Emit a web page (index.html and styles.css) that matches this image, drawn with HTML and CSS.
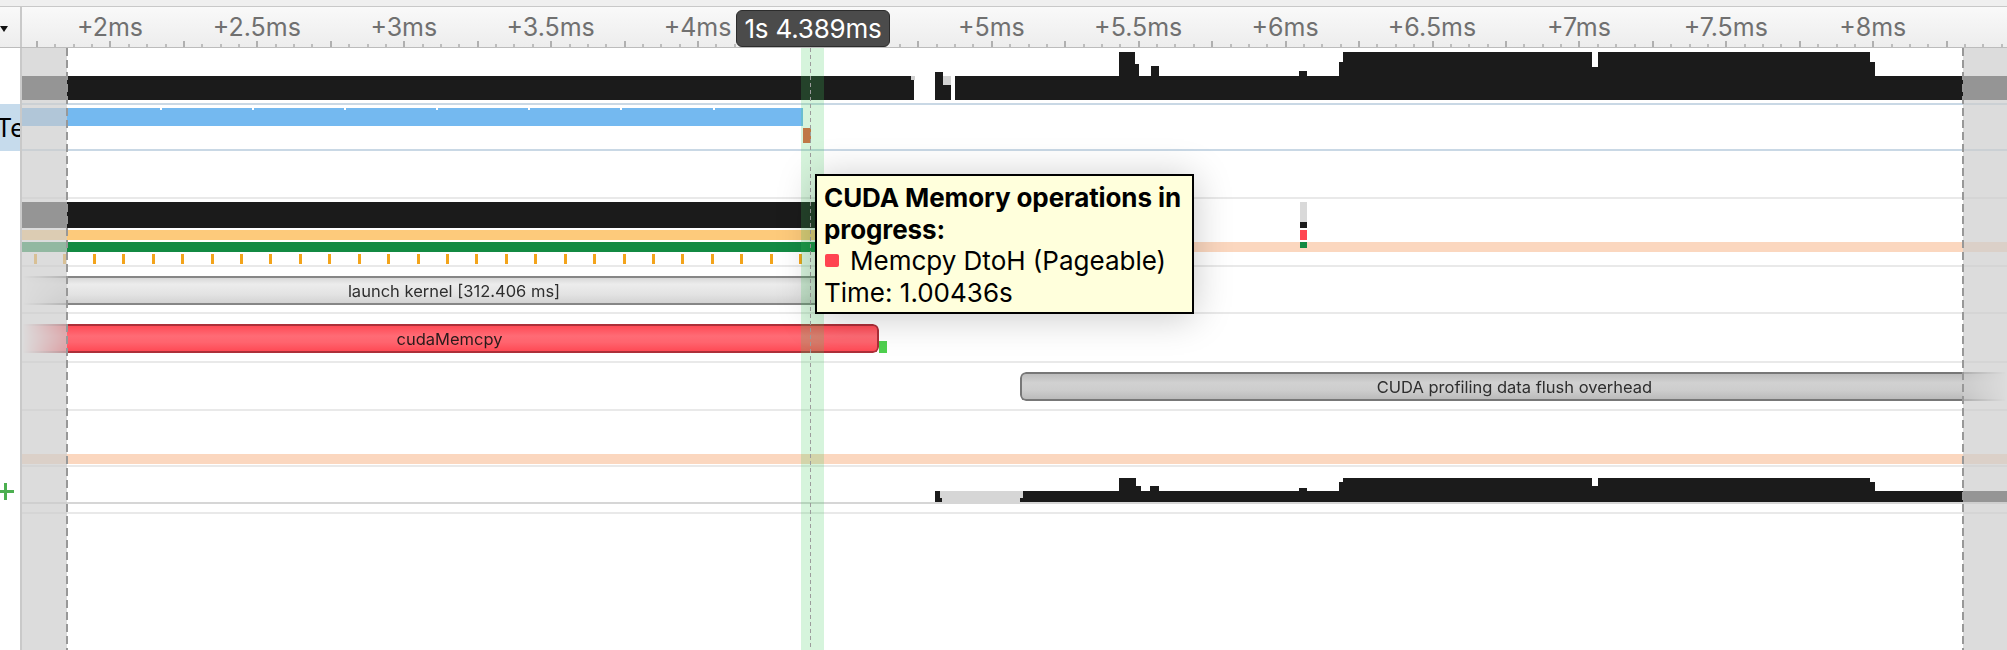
FILE: index.html
```html
<!DOCTYPE html>
<html>
<head>
<meta charset="utf-8">
<title>Timeline</title>
<link rel="stylesheet" href="styles.css">
</head>
<body>
<div class="app">
  <div class="strip"></div>
  <div class="header">
    <div class="corner"><span class="caret"></span></div>
    <div class="ruler">
      <div class="labels">
        <span>+2ms</span><span>+2.5ms</span><span>+3ms</span><span>+3.5ms</span><span>+4ms</span><span></span><span>+5ms</span><span>+5.5ms</span><span>+6ms</span><span>+6.5ms</span><span>+7ms</span><span>+7.5ms</span><span>+8ms</span>
      </div>
      <div class="badge">1s 4.389ms</div>
    </div>
  </div>
  <div class="main">
    <div class="side">
      <div class="srow s-a"></div>
      <div class="srow s-sel"><span class="lbl">Te</span></div>
      <div class="srow s-mid"></div>
      <div class="srow s-add">
        <svg class="plus" width="17" height="17" viewBox="0 0 17 17"><path d="M8.5 0V17M0 8.5H17" stroke="#4caf50" stroke-width="3"/></svg>
      </div>
    </div>
    <div class="tracks">
      <div class="row row-a">
        <svg class="chart chart-a" width="1985" height="55" viewBox="22 48 1985 55">
          <path d="M22 76H914V100H22Z" fill="#1b1b1b"/>
          <rect x="911" y="76" width="4" height="4" fill="#d0d0d0"/>
          <path d="M935 72H943V85H951V100H935Z" fill="#1b1b1b"/>
          <rect x="943" y="76" width="8" height="9" fill="#d2d2d2"/>
          <path d="M955 76H1119V52H1135V64H1139V76H1151V66H1159V76H1299V71H1307V76H1339V62H1343V52H1592V67H1598V52H1870V62H1875V76H2007V100H955Z" fill="#1b1b1b"/>
        </svg>
      </div>
      <div class="row row-b">
        <div class="bar blue"></div>
        <div class="bar red-mini"></div>
      </div>
      <div class="row row-c"></div>
      <div class="row row-d">
        <div class="bar d-black"></div>
        <div class="bar d-orange"></div>
        <div class="bar d-green"></div>
        <div class="bar d-salmon"></div>
        <div class="bar d-ticks"></div>
        <div class="bar m-gray"></div>
        <div class="bar m-black"></div>
        <div class="bar m-red"></div>
        <div class="bar m-green"></div>
      </div>
      <div class="row row-e">
        <div class="slice launch">launch kernel [312.406 ms]</div>
      </div>
      <div class="row row-f">
        <div class="slice memcpy">cudaMemcpy</div>
        <div class="bar f-green"></div>
      </div>
      <div class="row row-g">
        <div class="slice flush">CUDA profiling data flush overhead</div>
      </div>
      <div class="row row-h">
        <div class="bar h-salmon"></div>
      </div>
      <div class="row row-i">
        <svg class="chart chart-i" width="1985" height="35" viewBox="22 467 1985 35">
          <path d="M935 491H940V498H942V502H935Z" fill="#1b1b1b"/>
          <rect x="940" y="491" width="83" height="7" fill="#d6d6d6"/>
          <rect x="942" y="498" width="78" height="4" fill="#d6d6d6"/>
          <path d="M1023 491H1119V478H1136V486H1141V491H1150V486H1159V491H1299V488H1307V491H1339V482H1343V478H1592V486H1598V478H1870V482H1875V491H2007V502H1020V498H1023Z" fill="#1b1b1b"/>
        </svg>
      </div>
      <div class="row row-j"></div>

      <div class="shade shade-left"></div>
      <div class="shade shade-right"></div>
      <div class="edge edge-left"></div>
      <div class="edge edge-right"></div>
      <div class="cursor-band"></div>
      <div class="cursor-line"></div>

      <div class="tip">
        <div class="tip-title">CUDA Memory operations in<br>progress:</div>
        <div class="tip-item"><span class="sw"></span>Memcpy DtoH (Pageable)</div>
        <div class="tip-item">Time: 1.00436s</div>
      </div>
    </div>
  </div>
</div>
</body>
</html>
```

FILE: styles.css
```css
* { box-sizing: border-box; }
html, body { margin: 0; padding: 0; }
body {
  width: 2007px;
  height: 650px;
  overflow: hidden;
  background: #fff;
  font-family: Inter, "Liberation Sans", sans-serif;
}
.app { display: flex; flex-direction: column; height: 650px; }

.strip { height: 7px; background: #efefef; border-bottom: 1px solid #c8c8c8; }

.header {
  display: flex;
  height: 41px;
  border-bottom: 1px solid #bcbcbc;
  background: linear-gradient(#f9f9f9, #ededed);
}
.corner {
  width: 22px;
  border-right: 2px solid #c9c9c9;
  display: flex;
  align-items: center;
  padding-top: 4px;
}
.caret {
  width: 0; height: 0;
  border-left: 4.5px solid transparent;
  border-right: 4.5px solid transparent;
  border-top: 6px solid #111;
}
.ruler {
  position: relative;
  flex: 1;
  background:
    repeating-linear-gradient(to right, #b0b0b0 0 2px, transparent 2px 73.45px) 13.5px 100% / calc(100% - 13.5px) 6px no-repeat,
    repeating-linear-gradient(to right, #bdbdbd 0 2px, transparent 2px 18.3625px) 13.5px 100% / calc(100% - 13.5px) 3px no-repeat;
}
.labels {
  display: flex;
  height: 100%;
  align-items: center;
  padding-left: 14.55px;
  padding-bottom: 1px;
}
.labels span {
  flex: 0 0 146.9px;
  text-align: center;
  font-size: 25px;
  color: #707070;
  white-space: nowrap;
}
.badge {
  position: absolute;
  left: 714px;
  top: 3px;
  width: 154px;
  height: 37px;
  border-radius: 6px;
  background: #4b4b4b;
  border: 1px solid #2c2c2c;
  color: #fff;
  font-size: 26px;
  letter-spacing: -0.2px;
  display: flex;
  align-items: center;
  justify-content: center;
  white-space: nowrap;
}

.main { display: flex; height: 602px; }
.side {
  width: 22px;
  border-right: 2px solid #c9c9c9;
  display: flex;
  flex-direction: column;
  overflow: hidden;
}
.srow { flex: none; }
.s-a { height: 56px; }
.s-sel {
  height: 47px;
  background: #c6dbec;
  display: flex;
  align-items: center;
  overflow: hidden;
}
.lbl { font-size: 25px; color: #000; margin-left: -4px; white-space: nowrap; }
.s-mid { height: 316px; }
.s-add {
  height: 37px;
  display: flex;
  align-items: center;
  padding-top: 12px;
}
.plus { margin-left: -3px; flex: none; }

.tracks { position: relative; flex: 1; overflow: hidden; }
.row { position: relative; border-bottom: 2px solid #e9e9e9; }
.row-a { height: 57px; border-bottom-color: #c9d8e5; }
.row-b { height: 46px; border-bottom-color: #c9d8e5; }
.row-c { height: 48px; }
.row-d { height: 68px; }
.row-e { height: 47px; }
.row-f { height: 49px; }
.row-g { height: 48px; }
.row-h { height: 56px; }
.row-i { height: 37px; border-bottom-color: #d6d6d6; }
.row-j { height: 10px; }

.chart { position: absolute; left: 0; top: 0; display: block; }

.bar { position: absolute; }
.blue { left: 0; width: 781px; top: 3px; height: 18px; background: #74b9f0; }
.blue::before {
  content: "";
  position: absolute;
  left: 138px; right: 0; top: 0; height: 2px;
  background: repeating-linear-gradient(to right, #fff 0 2px, transparent 2px 92.1px);
}
.red-mini { left: 781px; width: 8px; top: 23px; height: 15px; background: #e2603f; }

.d-black { left: 0; width: 850px; top: 3px; height: 26px; background: #1b1b1b; }
.d-orange { left: 0; width: 850px; top: 31px; height: 10px; background: #fdca7b; }
.d-green { left: 0; width: 850px; top: 43px; height: 10px; background: #138a43; }
.d-salmon { left: 850px; right: 0; top: 43px; height: 10px; background: #fbd7bf; }
.d-ticks {
  left: 12.2px; width: 850px; top: 55px; height: 10px;
  background: repeating-linear-gradient(to right, #f3a41a 0 3px, transparent 3px 29.43px);
}
.m-gray { left: 1278px; width: 7px; top: 3px; height: 20px; background: #d9d9d9; }
.m-black { left: 1278px; width: 7px; top: 23px; height: 6px; background: #1b1b1b; }
.m-red { left: 1278px; width: 7px; top: 31px; height: 10px; background: #ff4652; }
.m-green { left: 1278px; width: 7px; top: 43px; height: 6px; background: #138a43; }

.slice {
  position: absolute;
  display: flex;
  align-items: center;
  justify-content: center;
  font-size: 16.5px;
  color: #2e2e2e;
  white-space: nowrap;
  overflow: hidden;
}
.launch {
  left: 0; width: 864px; top: 9px; height: 29px;
  border-top: 2px solid #868686;
  border-bottom: 2px solid #868686;
  background: linear-gradient(#d8d8d8, #ececec 25%, #e3e3e3 65%, #d3d3d3);
  -webkit-mask-image: linear-gradient(to right, transparent 0, #000 42px);
  mask-image: linear-gradient(to right, transparent 0, #000 42px);
}
.memcpy {
  left: 0; width: 857px; top: 10px; height: 29px;
  border: 2px solid #ad2f39;
  border-left: 0;
  border-radius: 0 6px 6px 0;
  background: linear-gradient(#ff4b56, #ff6b75 40%, #ff646e 65%, #ff4a55);
  color: #2a1a1a;
  -webkit-mask-image: linear-gradient(to right, transparent 0, #000 42px);
  mask-image: linear-gradient(to right, transparent 0, #000 42px);
}
.f-green { left: 857px; width: 8px; top: 27px; height: 12px; background: #4fd04f; }
.flush {
  left: 998px; width: 987px; top: 9px; height: 29px;
  border: 2px solid #777;
  border-right: 0;
  border-radius: 6px 0 0 6px;
  background: linear-gradient(#bcbcbc, #d1d1d1 35%, #cdcdcd 65%, #bbbbbb);
  -webkit-mask-image: linear-gradient(to left, transparent 0, #000 40px);
  mask-image: linear-gradient(to left, transparent 0, #000 40px);
}
.h-salmon { left: 0; right: 0; top: 43px; height: 10px; background: #fbd7bf; }

.shade { position: absolute; top: 0; bottom: 0; background: rgba(204, 204, 204, 0.69); }
.shade-left { left: 0; width: 45px; }
.shade-right { left: 1941px; right: 0; }
.edge {
  position: absolute; top: 0; bottom: 0; width: 2px;
  background: repeating-linear-gradient(to bottom, #989898 0 8px, transparent 8px 12px);
}
.edge-left { left: 44px; }
.edge-right { left: 1940px; }

.cursor-band {
  position: absolute; top: 0; bottom: 0;
  left: 779px; width: 23px;
  background: rgba(70, 205, 95, 0.22);
}
.cursor-line {
  position: absolute; top: 0; bottom: 0;
  left: 788px; width: 1px;
  background: repeating-linear-gradient(to bottom, #9c9c9c 0 4px, transparent 4px 7px);
}

.tip {
  position: absolute;
  left: 793px;
  top: 126px;
  width: 379px;
  height: 140px;
  background: #ffffdc;
  border: 2px solid #000;
  padding: 6px 7px 5px 7px;
  box-shadow: 0 3px 36px rgba(0, 0, 0, 0.22);
  font-size: 26px;
  line-height: 31.5px;
  color: #000;
  white-space: nowrap;
}
.tip-title { font-weight: 700; letter-spacing: -0.1px; }
.tip-item { display: flex; align-items: center; }
.sw {
  width: 14px; height: 13px;
  border-radius: 2px;
  background: #ff4450;
  margin: 0 11px 0 1px;
  flex: none;
}
```
